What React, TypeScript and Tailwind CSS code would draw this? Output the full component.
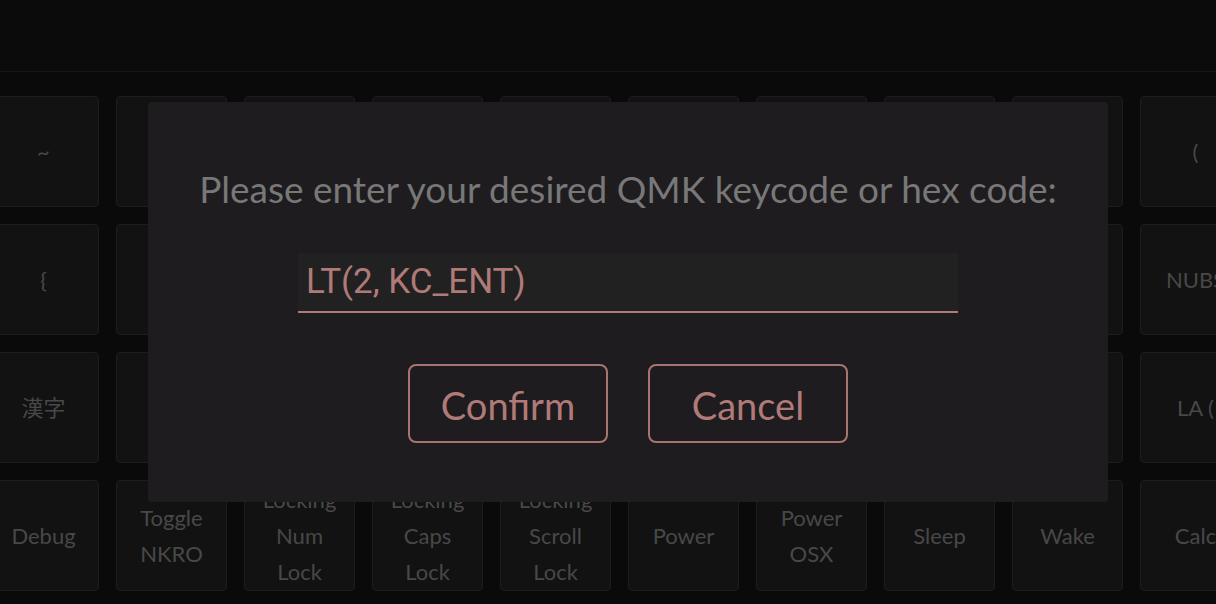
import React from 'react';

const rows: string[][] = [
  ['~', '!', '@', '#', '$', '%', '^', '&', '*', '('],
  ['{', '}', '|', ':', '"', '<', '>', '?', 'NUHS', 'NUBS'],
  ['漢字', 'かな', '変換', '無変換', 'ろ', '¥', 'LANG1', 'LANG2', 'LA (', 'LA ('],
  ['Debug', 'Toggle NKRO', 'Locking Num Lock', 'Locking Caps Lock', 'Locking Scroll Lock', 'Power', 'Power OSX', 'Sleep', 'Wake', 'Calc'],
];

const Key = ({ label }: { label: string }) => (
  <div className="w-[111px] h-[111px] shrink-0 rounded-[4px] border border-[#1d1d1d] bg-[#121212] flex items-center justify-center text-center text-[22px] leading-[36px] text-[#484848] px-2">
    {label}
  </div>
);

export default function App() {
  return (
    <div
      className="relative w-full h-[604px] overflow-hidden bg-[#0a0a0a]"
      style={{ fontFamily: '"Source Sans Pro", Lato, "Noto Sans CJK JP", sans-serif' }}
    >
      <div className="h-[72px] border-b border-[#161616] bg-[#0b0b0b]" />

      <div className="pt-[24px] ml-[-12px] flex flex-col gap-[17px]">
        {rows.map((row, i) => (
          <div key={i} className="flex gap-[17px]">
            {row.map((k, j) => (
              <Key key={j} label={k} />
            ))}
          </div>
        ))}
      </div>

      {/* Keycode dialog */}
      <div className="absolute left-[148px] top-[102px] w-[960px] h-[400px] rounded-[4px] bg-[#1e1c1e] flex flex-col items-center">
        <div className="mt-[63px] text-[37px] leading-[48px] text-[#787878]">
          Please enter your desired QMK keycode or hex code:
        </div>
        <div className="mt-[40px] w-[660px] h-[60px] bg-[#212121] border-b-2 border-[#b07a78] flex items-center px-[8px]">
          <span className="text-[35px] text-[#b07a78]" style={{ fontFamily: 'Roboto, sans-serif' }}>
            LT(2, KC_ENT)
          </span>
        </div>
        <div className="mt-[51px] flex gap-[40px]">
          <button className="w-[200px] h-[79px] pt-[3px] rounded-[8px] border-2 border-[#a87472] text-[38px] text-[#b07a78]">
            Confirm
          </button>
          <button className="w-[200px] h-[79px] pt-[3px] rounded-[8px] border-2 border-[#a87472] text-[38px] text-[#b07a78]">
            Cancel
          </button>
        </div>
      </div>
    </div>
  );
}
